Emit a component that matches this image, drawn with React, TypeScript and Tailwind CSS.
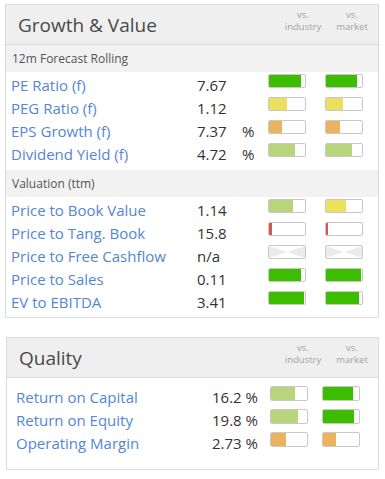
import React from "react";

type Bar = { pct: number; color: string } | null;
type Row = { label: string; value: string; unit?: string; ind: Bar; mkt: Bar };

const GREEN = "#3dbd00";
const YELLOW = "#ebe15e";
const ORANGE = "#ebb35d";
const LIGHT = "#b8d57b";
const RED = "#d9534f";

const forecast: Row[] = [
  { label: "PE Ratio (f)", value: "7.67", ind: { pct: 90, color: GREEN }, mkt: { pct: 85, color: GREEN } },
  { label: "PEG Ratio (f)", value: "1.12", ind: { pct: 50, color: YELLOW }, mkt: { pct: 46, color: YELLOW } },
  { label: "EPS Growth (f)", value: "7.37", unit: "%", ind: { pct: 37, color: ORANGE }, mkt: { pct: 38, color: ORANGE } },
  { label: "Dividend Yield (f)", value: "4.72", unit: "%", ind: { pct: 72, color: LIGHT }, mkt: { pct: 72, color: LIGHT } },
];

const valuation: Row[] = [
  { label: "Price to Book Value", value: "1.14", ind: { pct: 67, color: LIGHT }, mkt: { pct: 56, color: YELLOW } },
  { label: "Price to Tang. Book", value: "15.8", ind: { pct: 8, color: RED }, mkt: { pct: 6, color: RED } },
  { label: "Price to Free Cashflow", value: "n/a", ind: null, mkt: null },
  { label: "Price to Sales", value: "0.11", ind: { pct: 90, color: GREEN }, mkt: { pct: 97, color: GREEN } },
  { label: "EV to EBITDA", value: "3.41", ind: { pct: 96, color: GREEN }, mkt: { pct: 91, color: GREEN } },
];

const quality: Row[] = [
  { label: "Return on Capital", value: "16.2 %", ind: { pct: 68, color: LIGHT }, mkt: { pct: 83, color: GREEN } },
  { label: "Return on Equity", value: "19.8 %", ind: { pct: 76, color: LIGHT }, mkt: { pct: 86, color: GREEN } },
  { label: "Operating Margin", value: "2.73 %", ind: { pct: 42, color: ORANGE }, mkt: { pct: 35, color: ORANGE } },
];

function Meter({ bar, h }: { bar: Bar; h: string }) {
  return (
    <div className={`w-[38px] ${h} border border-[#c8c8c8] rounded-[2px] bg-white overflow-hidden`}>
      {bar ? (
        <div className="h-full" style={{ width: `${bar.pct}%`, background: bar.color }} />
      ) : (
        // no data: grey bow-tie
        <svg viewBox="0 0 36 12" preserveAspectRatio="none" className="w-full h-full block">
          <rect width="36" height="12" fill="#ebebeb" />
          <polygon points="0,0 36,0 18,6" fill="#ffffff" />
          <polygon points="0,12 36,12 18,6" fill="#ffffff" />
        </svg>
      )}
    </div>
  );
}

function Header({ title }: { title: string }) {
  return (
    <div className="h-[40px] bg-[#efefef] border-b border-[#dcdcdc] flex items-start">
      <h2 className="pl-[12px] leading-[40px] text-[19px] text-[#4a4a4a] flex-1">{title}</h2>
      <div className="flex text-[9.5px] leading-[12px] text-[#a3a3a3] text-center pt-[4px]">
        <div className="w-[44px]">vs.<br />industry</div>
        <div className="w-[36px] ml-[9px] mr-[8px]">vs.<br />market</div>
      </div>
    </div>
  );
}

function Section({ title }: { title: string }) {
  return (
    <div className="h-[27px] bg-[#f2f2f2] pl-[6px] text-[12px] leading-[27px] text-[#555]">{title}</div>
  );
}

function ForecastRow({ r }: { r: Row }) {
  return (
    <div className="h-[23px] flex items-start">
      <div className="w-[186px] leading-[23px] text-[15px] text-[#5386d4] whitespace-nowrap">{r.label}</div>
      <div className="w-[45px] leading-[23px] text-[15px] text-[#333]">{r.value}</div>
      <div className="w-[26px] leading-[23px] text-[15px] text-[#333]">{r.unit ?? ""}</div>
      <div className="flex gap-[19px]">
        <Meter bar={r.ind} h="h-[14px]" />
        <Meter bar={r.mkt} h="h-[14px]" />
      </div>
    </div>
  );
}

function QualityRow({ r }: { r: Row }) {
  return (
    <div className="h-[23px] flex items-start">
      <div className="w-[196px] leading-[23px] text-[15px] text-[#5386d4] whitespace-nowrap">{r.label}</div>
      <div className="w-[58px] leading-[23px] text-[15px] text-[#333] whitespace-pre">{r.value}</div>
      <div className="flex gap-[14px]">
        <Meter bar={r.ind} h="h-[15px]" />
        <Meter bar={r.mkt} h="h-[15px]" />
      </div>
    </div>
  );
}

export default function App() {
  return (
    <div className="w-[385px] h-[479px] bg-white pt-[4px] pl-[5px]" style={{ fontFamily: '"Open Sans", sans-serif' }}>
      <div className="w-[374px] border border-[#dcdcdc]">
        <Header title="Growth & Value" />
        <Section title="12m Forecast Rolling" />
        <div className="pl-[5px] pt-[2px] pb-[4px]">
          {forecast.map((r) => (
            <ForecastRow key={r.label} r={r} />
          ))}
        </div>
        <Section title="Valuation (ttm)" />
        <div className="pl-[5px] pt-[2px] pb-[3px]">
          {valuation.map((r) => (
            <ForecastRow key={r.label} r={r} />
          ))}
        </div>
      </div>

      <div className="w-[373px] ml-[1px] mt-[19px] border border-[#dcdcdc]">
        <Header title="Quality" />
        <div className="pl-[9px] pt-[8px] pb-[14px]">
          {quality.map((r) => (
            <QualityRow key={r.label} r={r} />
          ))}
        </div>
      </div>
    </div>
  );
}
